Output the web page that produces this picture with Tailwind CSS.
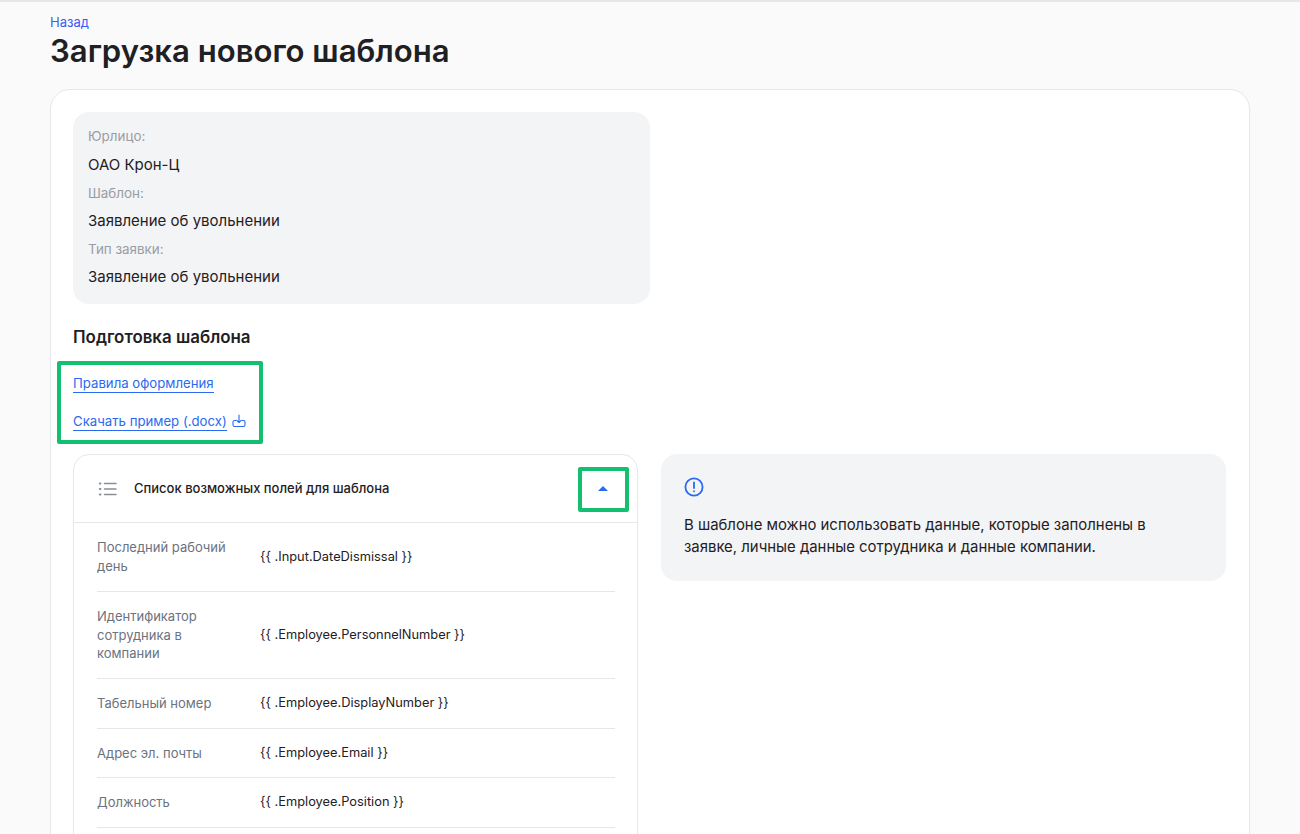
<!DOCTYPE html>
<html lang="ru">
<head>
    <meta charset="UTF-8">
    <meta name="viewport" content="width=device-width, initial-scale=1.0">
    <title>Загрузка нового шаблона</title>
    <script src="https://cdn.jsdelivr.net/npm/@tailwindcss/browser@4"></script>
</head>
<body class="h-[834px] overflow-hidden bg-[#fafafa] font-['Inter',sans-serif] text-[#1f2023]">
    <div class="h-[2px] bg-[#e5e7eb]"></div>

    <main class="px-[50px] pt-[12px]">
        <a href="#" class="block text-[13px] leading-[16px] text-[#3b5bf6]">Назад</a>
        <h1 class="mt-[1px] text-[31.100px] leading-[40px] font-semibold text-[#1f2023]">Загрузка нового шаблона</h1>

        <section class="mt-[18px] h-[800px] rounded-t-[20px] border border-[#e5e7eb] bg-white px-[22px] pt-[22px] relative">
            <!-- реквизиты -->
            <div class="w-[577px] rounded-[16px] bg-[#f3f4f6] px-[15px] pt-[14px] h-[192px]">
                <div class="text-[13.400px] leading-[20px] text-[#9a9ca3]">Юрлицо:</div>
                <div class="mt-[9px] text-[15px] leading-[20px]">ОАО Крон-Ц</div>
                <div class="mt-[8px] text-[13.400px] leading-[20px] text-[#9a9ca3]">Шаблон:</div>
                <div class="mt-[8px] text-[15px] leading-[20px]">Заявление об увольнении</div>
                <div class="mt-[8px] text-[13.400px] leading-[20px] text-[#9a9ca3]">Тип заявки:</div>
                <div class="mt-[8px] text-[15px] leading-[20px]">Заявление об увольнении</div>
            </div>

            <h2 class="mt-[21px] text-[16.900px] leading-[24px] font-semibold">Подготовка шаблона</h2>

            <div class="mt-[25px] flex flex-col items-start gap-[19px] text-[13.200px] leading-[18px] text-[#2a6af0]">
                <a href="#" class="border-b border-[#2a6af0]">Правила оформления</a>
                <div class="flex items-center gap-[5px]">
                    <a href="#" class="border-b border-[#2a6af0]">Скачать пример (.docx)</a>
                    <svg class="w-[14px] h-[14px] -mt-[2px]" viewBox="0 0 14 14" fill="none" stroke="#2a6af0" stroke-width="1.100" stroke-linecap="round" stroke-linejoin="round">
                        <path d="M7 1v7.500M4.800 6.300 7 8.500l2.200-2.200"/>
                        <path d="M4 6.500H2.500C1.700 6.500 1 7.200 1 8v3c0 .8.700 1.500 1.500 1.500h9c.8 0 1.500-.7 1.500-1.500V8c0-.8-.7-1.500-1.500-1.500H10"/>
                    </svg>
                </div>
            </div>

            <div class="mt-[23px] flex items-start gap-[23px]">
                <!-- список полей -->
                <div class="w-[565px] h-[500px] shrink-0 rounded-t-[16px] border border-[#e5e7eb]">
                    <div class="flex h-[68px] items-center border-b border-[#e5e7eb] pl-[24px] pr-[29px]">
                        <svg class="w-[20px] h-[20px]" viewBox="0 0 20 20" fill="none" stroke="#8b8e96" stroke-width="1.500" stroke-linecap="round">
                            <path d="M6.500 4.500h11.500M6.500 10h11.500M6.500 15.500h11.500"/>
                            <path d="M1.800 4.500h.7M1.800 10h.7M1.800 15.500h.7" stroke-width="2"/>
                        </svg>
                        <span class="ml-[16px] text-[13px] font-[450]">Список возможных полей для шаблона</span>
                        <svg class="ml-auto w-[10px] h-[5px]" viewBox="0 0 10 5"><path d="M5 0 10 5H0z" fill="#2a6af0"/></svg>
                    </div>
                    <div class="pl-[23px] pr-[22px] text-[13px] leading-[18.700px]">
                        <div class="flex items-center border-b border-[#e5e7eb] h-[69px]">
                            <div class="w-[163px] pr-[20px] text-[#6b7280]">Последний рабочий день</div>
                            <div class="text-[12.830px]">{{ .Input.DateDismissal }}</div>
                        </div>
                        <div class="flex items-center border-b border-[#e5e7eb] h-[87px]">
                            <div class="w-[163px] pr-[40px] text-[#6b7280]">Идентификатор сотрудника в компании</div>
                            <div class="text-[12.830px]">{{ .Employee.PersonnelNumber }}</div>
                        </div>
                        <div class="flex items-center border-b border-[#e5e7eb] h-[50px]">
                            <div class="w-[163px] text-[#6b7280]">Табельный номер</div>
                            <div class="text-[12.830px]">{{ .Employee.DisplayNumber }}</div>
                        </div>
                        <div class="flex items-center border-b border-[#e5e7eb] h-[49px]">
                            <div class="w-[163px] text-[#6b7280]">Адрес эл. почты</div>
                            <div class="text-[12.830px]">{{ .Employee.Email }}</div>
                        </div>
                        <div class="flex items-center border-b border-[#e5e7eb] h-[50px]">
                            <div class="w-[163px] text-[#6b7280]">Должность</div>
                            <div class="text-[12.830px]">{{ .Employee.Position }}</div>
                        </div>
                    </div>
                </div>

                <!-- подсказка -->
                <div class="w-[565px] h-[127px] rounded-[16px] bg-[#f3f4f6] px-[23px] pt-[23px]">
                    <svg class="w-[20px] h-[20px]" viewBox="0 0 20 20" fill="none" stroke="#2a6af0" stroke-width="1.800" stroke-linecap="round">
                        <circle cx="10" cy="10" r="8.600"/>
                        <path d="M10 5.500v5.500M10 14.200v.1"/>
                    </svg>
                    <p class="mt-[17px] max-w-[480px] text-[14.900px] leading-[22px]">В шаблоне можно использовать данные, которые заполнены в заявке, личные данные сотрудника и данные компании.</p>
                </div>
            </div>

            <!-- зелёные рамки поверх скриншота -->
            <div class="absolute left-[6px] top-[271px] w-[206px] h-[83px] rounded-[2px] border-[4px] border-[#14c06f]"></div>
            <div class="absolute left-[527px] top-[377px] w-[51px] h-[45px] rounded-[2px] border-[4px] border-[#14c06f]"></div>
        </section>
    </main>
</body>
</html>
